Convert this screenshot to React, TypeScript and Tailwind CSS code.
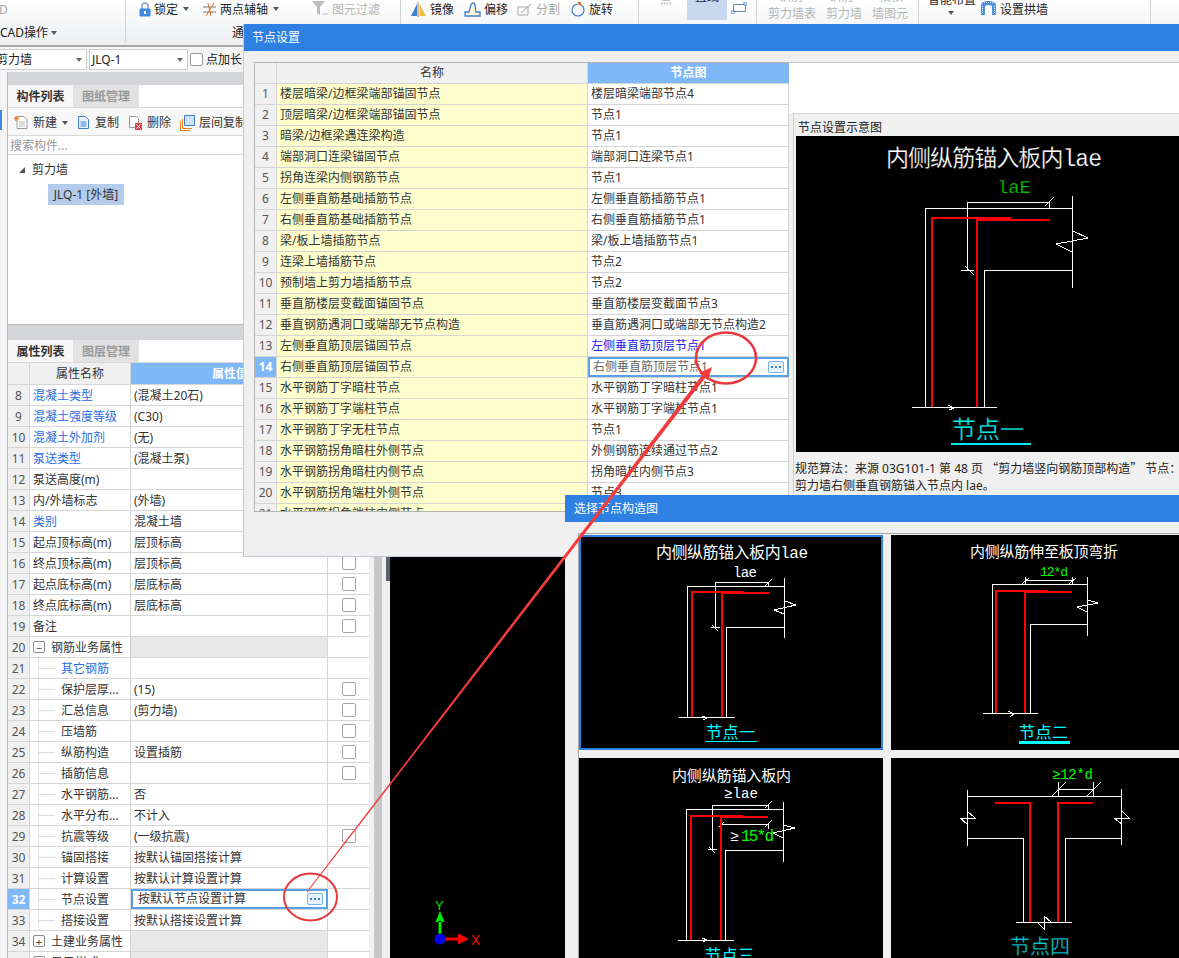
import React from 'react';

const dialogRows: [string, string][] = [
    ['楼层暗梁/边框梁端部锚固节点', '楼层暗梁端部节点4'],
    ['顶层暗梁/边框梁端部锚固节点', '节点1'],
    ['暗梁/边框梁遇连梁构造', '节点1'],
    ['端部洞口连梁锚固节点', '端部洞口连梁节点1'],
    ['拐角连梁内侧钢筋节点', '节点1'],
    ['左侧垂直筋基础插筋节点', '左侧垂直筋插筋节点1'],
    ['右侧垂直筋基础插筋节点', '右侧垂直筋插筋节点1'],
    ['梁/板上墙插筋节点', '梁/板上墙插筋节点1'],
    ['连梁上墙插筋节点', '节点2'],
    ['预制墙上剪力墙插筋节点', '节点2'],
    ['垂直筋楼层变截面锚固节点', '垂直筋楼层变截面节点3'],
    ['垂直钢筋遇洞口或端部无节点构造', '垂直筋遇洞口或端部无节点构造2'],
    ['左侧垂直筋顶层锚固节点', '左侧垂直筋顶层节点1'],
    ['右侧垂直筋顶层锚固节点', '右侧垂直筋顶层节点1'],
    ['水平钢筋丁字暗柱节点', '水平钢筋丁字暗柱节点1'],
    ['水平钢筋丁字端柱节点', '水平钢筋丁字端柱节点1'],
    ['水平钢筋丁字无柱节点', '节点1'],
    ['水平钢筋拐角暗柱外侧节点', '外侧钢筋连续通过节点2'],
    ['水平钢筋拐角暗柱内侧节点', '拐角暗柱内侧节点3'],
    ['水平钢筋拐角端柱外侧节点', '节点3'],
    ['水平钢筋拐角端柱内侧节点', '节点3'],
];

interface Prop {
    no: number;
    name: string;
    value?: string;
    link?: boolean;
    check?: boolean;
    child?: boolean;
    section?: '+' | '-';
}

const props: Prop[] = [
    {no: 8, name: '混凝土类型', value: '(混凝土20石)', link: true},
    {no: 9, name: '混凝土强度等级', value: '(C30)', link: true},
    {no: 10, name: '混凝土外加剂', value: '(无)', link: true},
    {no: 11, name: '泵送类型', value: '(混凝土泵)', link: true},
    {no: 12, name: '泵送高度(m)'},
    {no: 13, name: '内/外墙标志', value: '(外墙)'},
    {no: 14, name: '类别', value: '混凝土墙', link: true},
    {no: 15, name: '起点顶标高(m)', value: '层顶标高'},
    {no: 16, name: '终点顶标高(m)', value: '层顶标高', check: true},
    {no: 17, name: '起点底标高(m)', value: '层底标高', check: true},
    {no: 18, name: '终点底标高(m)', value: '层底标高', check: true},
    {no: 19, name: '备注', check: true},
    {no: 20, name: '钢筋业务属性', section: '-'},
    {no: 21, name: '其它钢筋', link: true, child: true},
    {no: 22, name: '保护层厚...', value: '(15)', check: true, child: true},
    {no: 23, name: '汇总信息', value: '(剪力墙)', check: true, child: true},
    {no: 24, name: '压墙筋', check: true, child: true},
    {no: 25, name: '纵筋构造', value: '设置插筋', check: true, child: true},
    {no: 26, name: '插筋信息', check: true, child: true},
    {no: 27, name: '水平钢筋...', value: '否', child: true},
    {no: 28, name: '水平分布...', value: '不计入', child: true},
    {no: 29, name: '抗震等级', value: '(一级抗震)', check: true, child: true},
    {no: 30, name: '锚固搭接', value: '按默认锚固搭接计算', child: true},
    {no: 31, name: '计算设置', value: '按默认计算设置计算', child: true},
    {no: 32, name: '节点设置', value: '按默认节点设置计算', child: true},
    {no: 33, name: '搭接设置', value: '按默认搭接设置计算', child: true},
    {no: 34, name: '土建业务属性', section: '+'},
    {no: 35, name: '显示样式', section: '+'},
];

const Caret = ({className = ''}: { className?: string }) => (
    <span className={'inline-block w-0 h-0 border-x-[3.5px] border-x-transparent border-t-[4px] border-t-[#555] ' + className}/>
);

const MoreButton = ({className = ''}: { className?: string }) => (
    <span className={'flex items-center justify-center gap-[2px] w-[16px] h-[12px] rounded-[2px] border border-[#79b4f0] bg-[#e8f2fc] ' + className}>
        <i className="w-[2px] h-[2px] bg-[#3b7fd0]"/>
        <i className="w-[2px] h-[2px] bg-[#3b7fd0]"/>
        <i className="w-[2px] h-[2px] bg-[#3b7fd0]"/>
    </span>
);

function Ribbon() {
    return (
        <div className="flex h-[47px] border-b-2 border-[#a8a8a8] bg-gradient-to-b from-white to-[#eceef0] text-[12px] text-[#222]">
            <div className="w-[126px] h-[42px] shrink-0 border-r border-[#d2d2d2]">
                <div className="h-[18px] leading-[20px] text-[#aaa] -ml-[1px]">D</div>
                <div className="flex items-center h-[18px] mt-[6px]">CAD操作<Caret className="ml-[3px]"/></div>
            </div>
            <div className="w-[275px] h-[42px] shrink-0 border-r border-[#d2d2d2]">
                <div className="flex items-center h-[18px] pl-[13px]">
                    <svg width="12" height="15" viewBox="0 0 12 15">
                        <path d="M3 7V4a3 3 0 0 1 6 0v3" fill="none" stroke="#8aa4c8" strokeWidth="1.6"/>
                        <rect x="0.5" y="6.5" width="11" height="8" rx="1" fill="#3f8ae0"/>
                        <rect x="5" y="9" width="2" height="3" fill="#fff"/>
                    </svg>
                    <span className="ml-[3px] mt-[1px]">锁定</span>
                    <Caret className="ml-[5px]"/>
                    <svg className="ml-[13px]" width="15" height="15" viewBox="0 0 15 15" fill="none">
                        <path d="M1 5h13M1 10h13" stroke="#777"/>
                        <path d="M4 14 12 1M9 14 6 1" stroke="#e07030"/>
                    </svg>
                    <span className="ml-[3px] mt-[1px]">两点辅轴</span>
                    <Caret className="ml-[5px]"/>
                    <svg className="ml-[33px]" width="17" height="16" viewBox="0 0 17 16">
                        <path d="M0 0h13L8 6v8L5 12V6z" fill="#bdbdbd"/>
                        <path d="M11 13h5" stroke="#bdbdbd"/>
                    </svg>
                    <span className="ml-[3px] mt-[1px] text-[#b5b5b5]">图元过滤</span>
                </div>
                <div className="h-[18px] leading-[20px] mt-[5px] pl-[106px]">通</div>
            </div>
            <div className="w-[238px] h-[42px] shrink-0 border-r border-[#d2d2d2]">
                <div className="flex items-center h-[18px] pl-[10px]">
                    <svg width="15" height="15" viewBox="0 0 15 15">
                        <path d="M6 2v12H0z" fill="#3f7fd0"/>
                        <path d="M7 0v15" stroke="#d08020"/>
                        <path d="M8.500 2v12H15z" fill="#e8c040"/>
                    </svg>
                    <span className="ml-[4px] mt-[1px]">镜像</span>
                    <svg className="ml-[10px]" width="17" height="15" viewBox="0 0 17 15" fill="none">
                        <path d="M1 14V10h4l2-7a2 2 0 0 1 4 0l1 7h4v4z" stroke="#3f7fd0" fill="#fff6d8" strokeWidth="1.3"/>
                    </svg>
                    <span className="ml-[3px] mt-[1px]">偏移</span>
                    <svg className="ml-[9px]" width="16" height="15" viewBox="0 0 16 15" fill="none" stroke="#aaa">
                        <path d="M1 5h10v8H1zM4 11 14 2"/>
                    </svg>
                    <span className="ml-[3px] mt-[1px] text-[#aaa]">分割</span>
                    <svg className="ml-[11px]" width="14" height="15" viewBox="0 0 14 15" fill="none">
                        <circle cx="7" cy="8" r="6" stroke="#3f7fd0" strokeWidth="1.2"/>
                        <path d="M6 0h4v4z" fill="#e07020"/>
                    </svg>
                    <span className="ml-[4px] mt-[1px]">旋转</span>
                </div>
            </div>
            <div className="w-[118px] h-[42px] shrink-0 flex border-r border-[#d2d2d2]">
                <span className="ml-[21px] -mt-[9px] h-[18px] leading-[18px] w-[27px] text-[#bbb]">点</span>
                <span className="w-[40px] h-[20px] bg-[#c7d8ef] text-center leading-[12px] overflow-hidden"><span className="block -mt-[9px]">直线</span></span>
                <svg className="ml-[4px] mt-[2px]" width="16" height="12" viewBox="0 0 16 12" fill="none">
                    <path d="M2.500 2.500h12v7h-12z" stroke="#6a8ab0"/>
                    <rect x="13" y="0" width="3" height="3" fill="#fff" stroke="#2f70d0" strokeWidth="0.8"/>
                    <rect x="0" y="9" width="3" height="3" fill="#fff" stroke="#2f70d0" strokeWidth="0.8"/>
                </svg>
            </div>
            <div className="w-[162px] h-[42px] shrink-0 border-r border-[#d2d2d2] text-[#b5b5b5] overflow-hidden relative">
                <div className="flex -mt-[9px] h-[12px] leading-[12px] pl-[22px] gap-[26px]">
                    <span>识别</span><span>识别</span><span>校核</span>
                </div>
                <div className="flex h-[18px] leading-[18px] mt-[2px] pl-[11px]">
                    <span className="w-[58px]">剪力墙表</span>
                    <span className="w-[46px]">剪力墙</span>
                    <span>墙图元</span>
                </div>
            </div>
            <div className="w-[232px] h-[42px] shrink-0 flex border-r border-[#d2d2d2]">
                <div className="w-[62px] pl-[9px]">
                    <div className="-mt-[9px] h-[18px] leading-[18px]">智能布置</div>
                    <div className="flex justify-center pr-[7px] mt-[2px]"><Caret/></div>
                </div>
                <svg className="mt-[1px]" width="15" height="14" viewBox="0 0 15 14">
                    <path d="M0 14V4a7 4 0 0 1 15 0v10h-4V6a3.500 2 0 0 0-7 0v8z" fill="#4f90d8"/>
                    <path d="M1.500 5v8M13.500 5v8M3 1.500h9" stroke="#dcecff" strokeDasharray="1 1"/>
                </svg>
                <span className="ml-[4px] h-[18px] leading-[20px]">设置拱墙</span>
            </div>
        </div>
    );
}

function ComboBar() {
    return (
        <div className="flex items-center h-[25px] bg-[#f4f4f4] text-[12px] text-[#222]">
            <div className="flex items-center justify-between w-[87px] h-[21px] bg-white border border-[#d0d0d0] border-l-0 overflow-hidden">
                <span className="-ml-[4px] text-[12px]">剪力墙</span>
                <Caret className="mr-[4px] border-t-[#666]"/>
            </div>
            <div className="flex items-center justify-between w-[99px] h-[21px] ml-[2px] pl-[2px] bg-white border border-[#d0d0d0]">
                <span>JLQ-1</span>
                <Caret className="mr-[4px] border-t-[#666]"/>
            </div>
            <span className="w-[13px] h-[13px] ml-[2px] rounded-[2px] bg-white border border-[#9a9a9a]"/>
            <span className="ml-[3px]">点加长</span>
        </div>
    );
}

const Tabs = ({active, other}: { active: string; other: string }) => (
    <div className="flex h-[23px] border-b border-[#d8d8d8] bg-white font-bold text-[12px] shrink-0">
        <span className="w-[65px] text-center leading-[23px] text-[#333] bg-[#f7f7f7]">{active}</span>
        <span className="w-[66px] text-center leading-[23px] text-[#999] bg-[#e2e2e2]">{other}</span>
    </div>
);

function ListPanel() {
    return (
        <div className="h-[240px] shrink-0 flex flex-col bg-white border-b border-[#bbb] text-[12px] text-[#333] overflow-hidden">
            <Tabs active="构件列表" other="图纸管理"/>
            <div className="flex items-center h-[28px] pt-[2px] bg-[#f7f7f7] border-b border-[#d8d8d8] pl-[6px] whitespace-nowrap">
                <svg width="14" height="15" viewBox="0 0 14 15" fill="none">
                    <path d="M3 1.500h7l3 3v9H3z" fill="#fff" stroke="#999"/>
                    <path d="M5 7h6M5 9h6M5 11h6" stroke="#bbb"/>
                    <path d="M2 1v5M0 3.500h5" stroke="#e88020" strokeWidth="1.4"/>
                </svg>
                <span className="ml-[5px]">新建</span>
                <Caret className="ml-[5px]"/>
                <svg className="ml-[9px]" width="13" height="15" viewBox="0 0 13 15" fill="none">
                    <path d="M1.500 1.500h7l3 3v9h-10z" fill="#eaf3fd" stroke="#3f7fd0"/>
                    <path d="M3.500 7h6M3.500 9h6M3.500 11h6" stroke="#3f7fd0"/>
                </svg>
                <span className="ml-[5px]">复制</span>
                <svg className="ml-[9px]" width="15" height="15" viewBox="0 0 15 15" fill="none">
                    <path d="M1.500 1.500h7l2 2v9h-9z" fill="#fff" stroke="#999"/>
                    <rect x="7" y="8" width="7" height="7" fill="#e04040"/>
                    <path d="M8.500 9.500l4 4M12.500 9.500l-4 4" stroke="#fff"/>
                </svg>
                <span className="ml-[4px]">删除</span>
                <svg className="ml-[9px]" width="15" height="16" viewBox="0 0 15 16" fill="none">
                    <path d="M4.500 .500h10v10h-10z" fill="#cfe2f8" stroke="#3f7fd0"/>
                    <path d="M2.500 4v9.500H12M.500 6v9.500H10" stroke="#e88020"/>
                </svg>
                <span className="ml-[4px]">层间复制</span>
            </div>
            <div className="h-[19px] leading-[20px] pl-[2px] border-b border-[#d8d8d8] text-[#999]">搜索构件...</div>
            <div className="flex items-center mt-[6px] h-[18px] pl-[11px]">
                <span className="w-0 h-0 border-l-[6px] border-l-transparent border-b-[6px] border-b-[#555]"/>
                <span className="ml-[7px]">剪力墙</span>
            </div>
            <div className="ml-[40px] mt-[5px] w-[76px] h-[21px] leading-[21px] text-center bg-[#b4ccec]">JLQ-1 [外墙]</div>
        </div>
    );
}

function PropRow({row}: { row: Prop }) {
    const selected = row.no === 32;
    return (
        <div className="flex h-[21px] shrink-0 leading-[21px] border-b border-[#d6d6d6] whitespace-nowrap">
            <span className={selected
                ? 'w-[22px] text-center border-r border-[#d6d6d6] bg-[#7fb8f8] text-white font-bold'
                : 'w-[22px] text-center border-r border-[#d6d6d6] bg-[#f0f0f0] text-[#555]'}>{row.no}</span>
            {row.section ? (
                <span className="flex items-center w-[101px] pl-[3px] border-r border-[#d6d6d6]">
                    <span className="flex items-center justify-center w-[12px] h-[12px] border border-[#888] rounded-[2px] text-[11px] leading-none text-[#444]">{row.section === '-' ? '−' : '+'}</span>
                    <span className="ml-[6px]">{row.name}</span>
                </span>
            ) : row.child ? (
                <span className="flex w-[101px] pl-[8px] border-r border-[#d6d6d6]">
                    <span className="flex items-center w-[23px] border-l border-[#e4e4e4]"><i className="w-[16px] h-px bg-[#dcdcdc]"/></span>
                    <span className={row.link ? 'text-[#2a6de0]' : ''}>{row.name}</span>
                </span>
            ) : (
                <span className={row.link ? 'w-[101px] pl-[3px] border-r border-[#d6d6d6] text-[#2a6de0]' : 'w-[101px] pl-[3px] border-r border-[#d6d6d6]'}>{row.name}</span>
            )}
            {selected ? (
                <span className="relative flex items-center justify-between w-[197px] pl-[5px] pr-[3px] border-2 border-[#5aa0e8] leading-none">
                    {row.value}
                    <MoreButton/>
                </span>
            ) : (
                <span className={row.section
                    ? 'w-[197px] pl-[3px] border-r border-[#d6d6d6] bg-[#e8e8e8]'
                    : 'w-[197px] pl-[3px] border-r border-[#d6d6d6]'}>{row.value}</span>
            )}
            <span className="flex items-center justify-center w-[41px]">
                {row.check && <i className="w-[14px] h-[14px] rounded-[2px] border border-[#a6a6a6] bg-white"/>}
            </span>
        </div>
    );
}

function PropPanel() {
    return (
        <div className="flex-1 flex flex-col bg-white text-[12px] text-[#333] overflow-hidden">
            <Tabs active="属性列表" other="图层管理"/>
            <div className="flex h-[22px] shrink-0 leading-[22px] border-b border-[#d6d6d6]">
                <span className="w-[22px] bg-[#f0f0f0] border-r border-[#d6d6d6]"/>
                <span className="w-[101px] text-center bg-[#f0f0f0] border-r border-[#d6d6d6]">属性名称</span>
                <span className="w-[198px] text-center bg-[#7fb8f8] text-white font-bold">属性值</span>
            </div>
            {props.map(row => <PropRow key={row.no} row={row}/>)}
        </div>
    );
}

const Wire = ({d, color = '#fff', width = 1}: { d: string; color?: string; width?: number }) => (
    <path d={d} fill="none" stroke={color} strokeWidth={width}/>
);

// big captions get a hair of black stroke so they read as thin as the CAD font
function CadText({x, y, w, size, fill = '#fff', children}: { x: number; y: number; w: number; size: number; fill?: string; children: string }) {
    return (
        <text x={x} y={y} fontSize={size} fill={fill} stroke={size > 18 ? '#000' : 'none'} strokeWidth={0.25} textLength={w} lengthAdjust="spacing"
              className="font-['Liberation_Mono','Noto_Sans_CJK_SC',monospace]">{children}</text>
    );
}

function BigDrawing() {
    return (
        <svg className="block w-[383px] h-[316px] bg-black" viewBox="796 136 383 316" shapeRendering="crispEdges">
            <CadText x={886} y={166} w={216} size={23}>内侧纵筋锚入板内lae</CadText>
            <CadText x={997} y={193} w={34} size={19} fill="#00c800">laE</CadText>
            <Wire d="M912 407.500H997M925.500 407.500V208.500H1072.500M1072.500 196V288M984.500 407.500V270.500H1072.500"/>
            <Wire d="M967.500 271V202.500H1049.500V208M1045 206l9-9M961 270.500h13M965 266l9 9"/>
            <Wire d="M1073 231l15 7-32 6 16 8M948 405l6 3-5 2"/>
            <Wire d="M932 407V218H1011M977 407V220H1049" color="#f00" width={2}/>
            <CadText x={952} y={438} w={72} size={24} fill="#00e8e8">节点一</CadText>
            <Wire d="M951 443.500H1031" color="#00e8e8" width={2}/>
        </svg>
    );
}

function Card1() {
    return (
        <svg className="block w-full h-full" viewBox="581 537 300 211" shapeRendering="crispEdges">
            <CadText x={656} y={558} w={152} size={16}>内侧纵筋锚入板内lae</CadText>
            <CadText x={733} y={577} w={24} size={14}>lae</CadText>
            <Wire d="M679 717.500H735M687.500 717.500V586.500H784.500M784.500 578V638M726.500 717.500V627.500H784.500"/>
            <Wire d="M715.500 627V582.500H768.500V587M765 586l7-7M711 627.500h9M712 625l6 6"/>
            <Wire d="M785 601l11 4-22 5 10 4M702 716l5 2-4 2"/>
            <Wire d="M692 717V592H744M722 717V593H769" color="#f00" width={2}/>
            <CadText x={706} y={738} w={49} size={16} fill="#00ffff">节点一</CadText>
            <Wire d="M705 741.500H757" color="#00ffff" width={1.5}/>
        </svg>
    );
}

function Card2() {
    return (
        <svg className="block w-full h-full" viewBox="891 535 288 215" shapeRendering="crispEdges">
            <CadText x={970} y={557} w={148} size={15}>内侧纵筋伸至板顶弯折</CadText>
            <CadText x={1040} y={576} w={28} size={13} fill="#00ff00">12*d</CadText>
            <Wire d="M983 713.500H1038M992.500 713.500V584.500H1087.500M1087.500 577V636M1030.500 713.500V624.500H1087.500"/>
            <Wire d="M1025.500 584V577M1072.500 584V577M1025 580.500H1072M1022 584l7-6M1069 584l7-6"/>
            <Wire d="M1088 600l10 3-21 4 10 5M1008 711l6 3-4 3"/>
            <Wire d="M996 713V591H1048M1025 713V592H1072" color="#f00" width={2}/>
            <CadText x={1019} y={738} w={49} size={16} fill="#00ffff">节点二</CadText>
            <Wire d="M1019 742.500H1070" color="#00ffff" width={3}/>
        </svg>
    );
}

function Card3() {
    return (
        <svg className="block w-full h-full" viewBox="579 758 304 200" shapeRendering="crispEdges">
            <CadText x={672} y={781} w={119} size={15}>内侧纵筋锚入板内</CadText>
            <CadText x={724} y={798} w={34} size={14}>≥lae</CadText>
            <Wire d="M678 940.500H734M686.500 940.500V809.500H783.500M783.500 802V862M725.500 940.500V850.500H783.500"/>
            <Wire d="M712.500 850V805.500H768.500V810M765 808l7-7M708 849.500h9M709 847l6 6"/>
            <Wire d="M721 824.500H768.500V829M719 827l5-5M765 827l7-7"/>
            <Wire d="M783 825l12 3-22 5 10 5M702 938l5 2-4 2"/>
            <Wire d="M691 940V816H743M721 940V817H768" color="#f00" width={2}/>
            <CadText x={730} y={841} w={11} size={15}>≥</CadText>
            <CadText x={741} y={841} w={33} size={16} fill="#00ff00">15*d</CadText>
            <CadText x={705} y={961} w={49} size={16} fill="#00ffff">节点三</CadText>
        </svg>
    );
}

function Card4() {
    return (
        <svg className="block w-full h-full" viewBox="891 758 288 200" shapeRendering="crispEdges">
            <CadText x={1052} y={779} w={41} size={14} fill="#00ff00">≥12*d</CadText>
            <Wire d="M967.500 790V846M1121.500 789V845M967 796.500H1121M967 838.500H1023.500V922M1121 838.500H1065.500V922M1016 922.500H1072"/>
            <Wire d="M1058.500 782V796M1093.500 782V796M1058 789.500H1093M1052 796l14-14M1087 796l14-14"/>
            <Wire d="M967 811l8 7h-15l7 6M1122 811l7 7h-15l8 6M1038 923l6 6v-13l7 6"/>
            <Wire d="M995 802.500H1030V922M1093 802.500H1058V922" color="#f00" width={2}/>
            <CadText x={1010} y={954} w={60} size={20} fill="#00c8d8">节点四</CadText>
        </svg>
    );
}

function NodeSettingsDialog() {
    return (
        <div className="absolute left-[243px] top-[24px] w-[936px] h-[533px] flex flex-col bg-[#f0f0f0] border-l border-b border-[#c4cad6] text-[12px] text-[#333]">
            <div className="h-[27px] shrink-0 pl-[8px] leading-[28px] bg-[#2f80e3] text-white">节点设置</div>
            <div className="flex mt-[11px] ml-[10px]">
                <div className="w-[535px] h-[450px] shrink-0 overflow-hidden bg-white border-l border-t border-b border-[#b4b4b4]">
                    <div className="flex h-[21px] leading-[20px] border-b border-[#d4d4d4]">
                        <span className="w-[22px] bg-[#f0f0f0] border-r border-[#d4d4d4]"/>
                        <span className="w-[311px] text-center bg-[#f0f0f0] border-r border-[#d4d4d4]">名称</span>
                        <span className="w-[201px] text-center bg-[#7fb8f8] text-white font-bold">节点图</span>
                    </div>
                    {dialogRows.map(([name, node], i) => {
                        const no = i + 1;
                        return (
                            <div key={no} className="flex h-[21px] leading-[20px] border-b border-[#d4d4d4] whitespace-nowrap">
                                <span className={no === 14
                                    ? 'w-[22px] text-center border-r border-[#d4d4d4] bg-[#7fb8f8] text-white font-bold'
                                    : 'w-[22px] text-center border-r border-[#d4d4d4] bg-[#f0f0f0] text-[#555]'}>{no}</span>
                                <span className="w-[311px] pl-[3px] border-r border-[#d4d4d4] bg-[#ffffcd]">{name}</span>
                                {no === 14 ? (
                                    <span className="flex items-center justify-between w-[201px] pl-[3px] pr-[3px] border-2 border-[#5aa0e8] text-[#666] leading-none">
                                        {node}
                                        <MoreButton/>
                                    </span>
                                ) : (
                                    <span className={no === 13 ? 'w-[201px] pl-[3px] border-r border-[#d4d4d4] text-[#2222ee]' : 'w-[201px] pl-[3px] border-r border-[#d4d4d4]'}>{node}</span>
                                )}
                            </div>
                        );
                    })}
                </div>
                <div className="flex-1 flex flex-col">
                    <div className="h-[51px] bg-white border-t border-[#c8c8c8]"/>
                    <div className="ml-[4px] pl-[2px] border-l border-t border-[#d0d0d0] whitespace-nowrap overflow-hidden">
                        <div className="h-[22px] leading-[27px] ml-[2px] text-[#222]">节点设置示意图</div>
                        <BigDrawing/>
                        <div className="mt-[7px] -ml-[1px] leading-[17px] text-[#222]">
                            <p>规范算法：来源 03G101-1 第 48 页 <span className="font-['Noto_Sans_CJK_SC',sans-serif]">“</span>剪力墙竖向钢筋顶部构造<span className="font-['Noto_Sans_CJK_SC',sans-serif]">”</span> 节点：</p>
                            <p>剪力墙右侧垂直钢筋锚入节点内 lae。</p>
                        </div>
                    </div>
                </div>
            </div>
        </div>
    );
}

function PickDialog() {
    return (
        <div className="absolute left-[565px] top-[495px] w-[614px] h-[463px] flex flex-col bg-[#f0f0f0] text-[12px]">
            <div className="h-[27px] shrink-0 pl-[9px] leading-[28px] bg-[#2f80e3] text-white">选择节点构造图</div>
            <div className="mt-[11px] ml-[13px] flex-1 pt-px border-l border-t border-[#a8a8a8]">
                <div className="grid grid-cols-[304px_288px] grid-rows-[215px_200px] gap-x-[8px] gap-y-[8px]">
                    <div className="bg-black border-2 border-[#2f80e3]"><Card1/></div>
                    <div className="bg-black"><Card2/></div>
                    <div className="bg-black"><Card3/></div>
                    <div className="bg-black"><Card4/></div>
                </div>
            </div>
        </div>
    );
}

// red hand-drawn markup lying over both dialogs
function Markup() {
    return (
        <svg className="absolute left-0 top-0 w-[1179px] h-[958px] pointer-events-none" viewBox="0 0 1179 958" fill="none">
            <ellipse cx="726" cy="358" rx="30" ry="25.500" stroke="#e8383c" strokeWidth="2.500"/>
            <ellipse cx="310.500" cy="897" rx="26.500" ry="23.500" stroke="#e8383c" strokeWidth="2"/>
            <polygon fill="#f23b3b" points="307.400,892.300 705.300,377.700 708,379.900 712,367 699.300,373.100 702.100,375.300 306.600,891.700"/>
        </svg>
    );
}

function AxisGizmo() {
    return (
        <svg className="absolute left-[425px] top-[895px]" width="65" height="55" viewBox="0 0 65 55">
            <text x="10" y="15" fontSize="13" fill="#00e000" className="font-['Liberation_Sans',sans-serif]">Y</text>
            <path d="M15 16l-4.500 11h9zM13.500 26h3v18h-3z" fill="#00ee00"/>
            <path d="M15 44h19" stroke="#f00" strokeWidth="3"/>
            <path d="M33 38.500l11 5.500-11 5.500z" fill="#f00"/>
            <circle cx="15" cy="44" r="5.500" fill="#0000e8"/>
            <text x="46" y="50" fontSize="14" fill="#f00" className="font-['Liberation_Sans',sans-serif]">X</text>
        </svg>
    );
}

export default function App() {
    return (
        <div className="relative w-[1179px] h-[958px] overflow-hidden bg-[#f0f0f0] font-['Noto_Sans','Noto_Sans_CJK_SC',sans-serif]">
            <Ribbon/>
            <ComboBar/>
            <div className="flex h-[886px]">
                <div className="w-[8px] shrink-0 pt-[38px] bg-[#f4f4f4] border-r border-[#b8b8b8]">
                    <div className="w-[2px] h-[20px] bg-[#3f8ae0]"/>
                </div>
                <div className="w-[361px] shrink-0 flex flex-col bg-[#d4d5d9] pt-[13px]">
                    <ListPanel/>
                    <div className="h-[15px] shrink-0"/>
                    <PropPanel/>
                </div>
                <div className="w-[21px] shrink-0 flex bg-[#f0f0f0]">
                    <div className="w-[8px] h-full ml-[5px] bg-[#c8c8c8]"/>
                    <div className="w-[4px] h-[24px] mt-[485px] ml-[4px] bg-[#5a6070]"/>
                </div>
                <div className="flex-1 bg-black"/>
            </div>
            <AxisGizmo/>
            <NodeSettingsDialog/>
            <PickDialog/>
            <Markup/>
        </div>
    );
}
